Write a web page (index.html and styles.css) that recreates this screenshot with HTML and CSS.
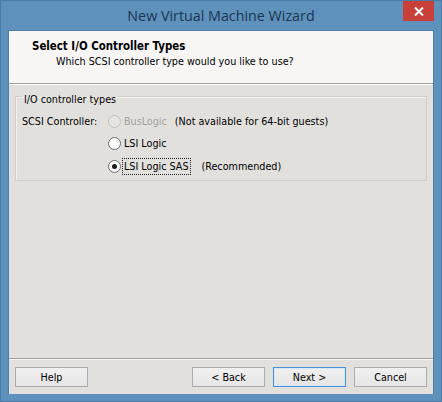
FILE: index.html
```html
<!DOCTYPE html>
<html>
<head>
<meta charset="utf-8">
<title>New Virtual Machine Wizard</title>
<link rel="stylesheet" href="styles.css">
</head>
<body>
<div class="window">
  <div class="titlebar">
    <span class="title">New Virtual Machine Wizard</span>
    <span class="close"><svg width="10" height="9" viewBox="0 0 10 9"><path d="M1 0.5 L9 8.5 M9 0.5 L1 8.5" stroke="#fff" stroke-width="2"/></svg></span>
  </div>
  <div class="client">
    <div class="header">
      <div class="h-title">Select I/O Controller Types</div>
      <div class="h-sub">Which SCSI controller type would you like to use?</div>
    </div>
    <div class="body">
      <fieldset class="group">
        <legend class="legend">I/O controller types</legend>
        <div class="grid">
          <div class="label">SCSI Controller:</div>
          <div class="option disabled"><span class="radio"></span><span class="opt-text">BusLogic</span><span class="note">(Not available for 64-bit guests)</span></div>
          <div></div>
          <div class="option"><span class="radio"></span><span class="opt-text">LSI Logic</span></div>
          <div></div>
          <div class="option"><span class="radio checked"></span><span class="opt-text focus">LSI Logic SAS</span><span class="note rec">(Recommended)</span></div>
        </div>
      </fieldset>
    </div>
    <div class="footer">
      <button class="btn">Help</button>
      <div class="spacer"></div>
      <button class="btn">&lt; Back</button>
      <button class="btn default">Next &gt;</button>
      <button class="btn">Cancel</button>
    </div>
  </div>
</div>
</body>
</html>
```
FILE: styles.css
```css
html, body {
  margin: 0;
  padding: 0;
}
body {
  width: 442px;
  height: 402px;
  overflow: hidden;
  background: #5b8dba;
  font-family: "DejaVu Sans Condensed", "DejaVu Sans", Tahoma, sans-serif;
  font-size: 10.7px;
  color: #000;
}
.window {
  width: 442px;
  height: 402px;
  box-sizing: border-box;
  background: #5f91bd;
  border: 1px solid #4a7aa6;
  display: flex;
  flex-direction: column;
  position: relative;
}
.titlebar {
  height: 29px;
  display: flex;
  align-items: center;
  justify-content: center;
}
.title {
  font-family: "Open Sans", "Noto Sans", sans-serif;
  font-size: 14.3px;
  color: #1d3550;
}
.close {
  position: absolute;
  top: 0;
  right: 7px;
  width: 31px;
  height: 20px;
  background: #c9403a;
  display: flex;
  align-items: center;
  justify-content: center;
}
.client {
  margin: 0 7px;
  height: 364px;
  background: #e2e0dd;
  display: flex;
  flex-direction: column;
  border: 1px solid #4f7ea9;
  border-bottom: none;
  box-sizing: border-box;
}
.header {
  height: 53px;
  box-sizing: border-box;
  background: #f7f6f5;
  border-bottom: 1px solid #a09f9c;
  padding: 8px 0 0 23px;
}
.h-title {
  font-weight: bold;
  font-size: 11.4px;
  line-height: 14px;
}
.h-sub {
  margin-top: 2px;
  padding-left: 24px;
  line-height: 14px;
}
.body {
  flex: 1;
  padding: 2px 6px 0;
  border-top: 1px solid #fff;
}
.group {
  margin: 0;
  height: 94px;
  box-sizing: border-box;
  border: 1px solid #cfcdca;
  box-shadow: inset 1px 1px 0 #f2f1ef;
  padding: 0 6px 0 6px;
}
.legend {
  padding: 6px 2px 0;
  line-height: 13px;
}
.grid {
  display: grid;
  grid-template-columns: 86px auto;
  grid-auto-rows: 22.5px;
  align-items: center;
  margin-top: 4px;
}
.label {
  white-space: nowrap;
}
.option {
  display: flex;
  align-items: center;
  white-space: nowrap;
}
.radio {
  width: 11px;
  height: 11px;
  border-radius: 50%;
  border: 1px solid #6e6e6e;
  background: radial-gradient(circle at 50% 40%, #ffffff 40%, #ececec 100%);
  display: flex;
  align-items: center;
  justify-content: center;
  flex: none;
}
.radio.checked::after {
  content: "";
  width: 5px;
  height: 5px;
  border-radius: 50%;
  background: #1a1a1a;
}
.disabled .radio {
  border-color: #c2c0bd;
  background: #e6e5e3;
}
.disabled {
  color: #a3a1a0;
}
.opt-text {
  margin-left: 1px;
  padding: 1px 1px;
  border: 1px dotted transparent;
}
.opt-text.focus {
  border-color: #222;
}
.note {
  margin-left: 6px;
  color: #000;
}
.note.rec {
  margin-left: 11px;
}
.footer {
  height: 36px;
  box-sizing: border-box;
  border-top: 1px solid #a09f9c;
  box-shadow: inset 0 1px 0 #f7f6f5;
  display: flex;
  align-items: flex-start;
  padding: 8px 6px 0;
  gap: 8px;
}
.spacer {
  flex: 1;
}
.btn {
  width: 73px;
  height: 20px;
  margin: 0;
  padding: 0;
  font-family: "DejaVu Sans Condensed", "DejaVu Sans", Tahoma, sans-serif;
  font-size: 10.7px;
  color: #000;
  border: 1px solid #acacac;
  background: linear-gradient(#f0f0f0, #e5e5e5);
  border-radius: 0;
}
.btn.default {
  border-color: #4a90d9;
  box-shadow: inset 0 0 0 1px #d6e7f7;
}
```
